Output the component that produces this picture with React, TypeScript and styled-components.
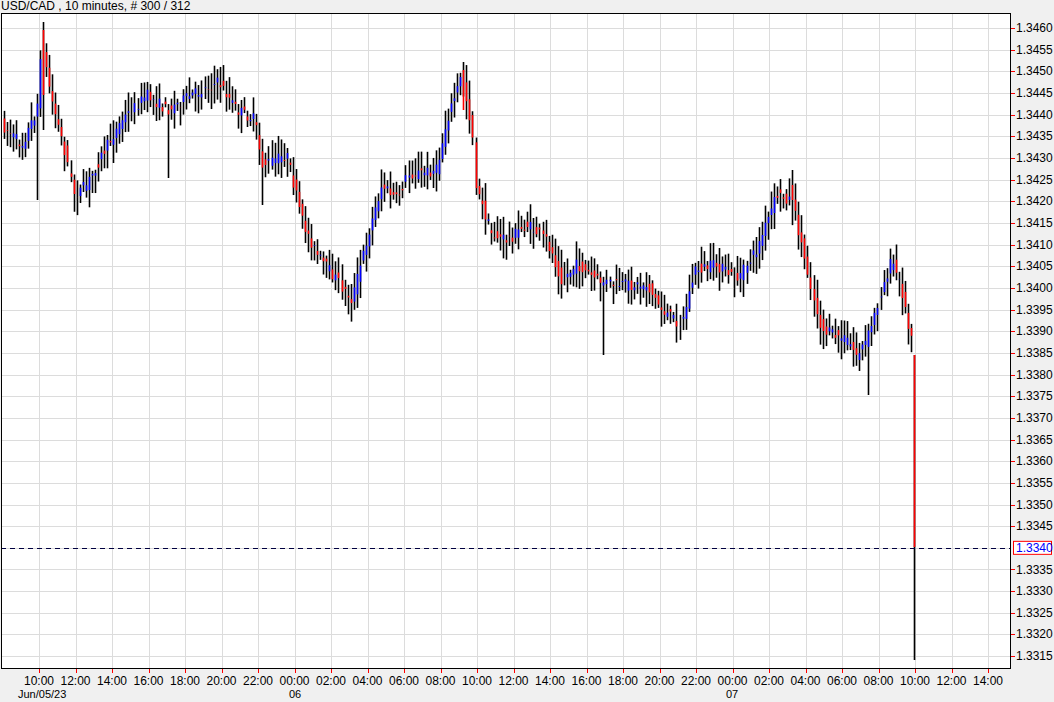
import React from 'react'
import styled, { createGlobalStyle } from 'styled-components'

const GlobalStyle = createGlobalStyle`
  html, body { margin: 0; padding: 0; background: #f0f0f0; overflow: hidden; }
  body { font-family: "Liberation Sans", Arial, sans-serif; }
`

const Page = styled.div`
  width: 1054px;
  height: 702px;
  display: flex;
  flex-direction: column;
  background: #f0f0f0;
`

const Title = styled.div`
  height: 13px;
  line-height: 12px;
  padding-left: 1px;
  font-size: 12px;
  color: #000;
  white-space: nowrap;
`

const Chart = styled.svg`
  display: block;
  font-family: "Liberation Sans", Arial, sans-serif;
`

// geometry
const PLOT_L = 1
const PLOT_R = 1011
const PLOT_T = 13
const PLOT_B = 669
const priceY = (p: number) => 28 + ((1.346 - p) / 0.0005) * 21.66
const barX = (i: number) => 914 - (299 - i) * 3.045

// path of the market, (x, y) in screen space
const path: [number, number][] = [
  [0, 120], [25, 145], [40, 110], [45, 45], [55, 100], [65, 140], [78, 195], [90, 185],
  [105, 155], [125, 120], [150, 95], [170, 110], [195, 95], [222, 82], [240, 110], [258, 120],
  [265, 165], [290, 155], [305, 220], [320, 255], [340, 280], [355, 300], [370, 240], [385, 185],
  [400, 200], [410, 175], [440, 170], [450, 120], [465, 75], [475, 130], [480, 190], [495, 235],
  [510, 240], [530, 225], [550, 240], [565, 280], [580, 265], [600, 280], [620, 285], [650, 285],
  [665, 310], [685, 325], [698, 270], [720, 265], [740, 280], [760, 250], [780, 195], [795, 200],
  [810, 270], [825, 330], [850, 340], [860, 355], [870, 340], [885, 290], [895, 260], [905, 290],
  [912, 330],
]

const midAt = (x: number) => {
  if (x <= path[0][0]) return path[0][1]
  for (let k = 0; k < path.length - 1; k++) {
    const [x0, y0] = path[k]
    const [x1, y1] = path[k + 1]
    if (x >= x0 && x <= x1) return y0 + ((y1 - y0) * (x - x0)) / (x1 - x0)
  }
  return path[path.length - 1][1]
}

let seed = 7
const rnd = () => {
  seed = (seed * 16807) % 2147483647
  return seed / 2147483647
}

type Bar = { x: number; h: number; l: number; o: number; c: number }

const bars: Bar[] = []
for (let i = 0; i < 299; i++) {
  const x = Math.round(barX(i)) + 0.5
  const m = midAt(x)
  const next = midAt(x + 3)
  const o = m + (rnd() - 0.5) * 12
  const c = next + (rnd() - 0.5) * 12
  const h = Math.min(o, c) - rnd() * 16 - 3
  const l = Math.max(o, c) + rnd() * 16 + 3
  bars.push({ x, h, l, o, c })
}
// a few spikes as in the reference
bars[11] = { ...bars[11], l: 200 }
bars[13] = { ...bars[13], h: 22, l: 130, o: 30, c: 95 }
bars[54] = { ...bars[54], l: 178 }
bars[85] = { ...bars[85], l: 205 }
bars[151] = { ...bars[151], h: 62, o: 70, c: 110 }
bars[197] = { ...bars[197], l: 355 }
bars[259] = { ...bars[259], h: 170, o: 185, c: 200 }
bars[284] = { ...bars[284], l: 395 }
bars.push({ x: 914.5, h: 355, l: 660, o: 355, c: 547 })

const prices: number[] = []
for (let k = 0; k <= 29; k++) prices.push(1.346 - k * 0.0005)

const timeTicks = [
  '10:00', '12:00', '14:00', '16:00', '18:00', '20:00', '22:00', '00:00', '02:00', '04:00', '06:00', '08:00',
  '10:00', '12:00', '14:00', '16:00', '18:00', '20:00', '22:00', '00:00', '02:00', '04:00', '06:00', '08:00',
  '10:00', '12:00', '14:00',
]
const timeX = (k: number) => 39 + k * 36.5

export default function App() {
  const current = 1.334
  const cy = priceY(current)
  return (
    <Page>
      <GlobalStyle />
      <Title>USD/CAD , 10 minutes, # 300 / 312</Title>
      <Chart width={1054} height={689} viewBox="0 13 1054 689">
        <rect x={PLOT_L} y={PLOT_T} width={PLOT_R - PLOT_L} height={PLOT_B - PLOT_T} fill="#fff" />
        {prices.map((p) => (
          <line key={p} x1={PLOT_L} x2={PLOT_R} y1={Math.round(priceY(p)) + 0.5} y2={Math.round(priceY(p)) + 0.5} stroke="#dcdcdc" />
        ))}
        {timeTicks.map((_, k) => (
          <line key={k} x1={Math.round(timeX(k)) + 0.5} x2={Math.round(timeX(k)) + 0.5} y1={PLOT_T} y2={PLOT_B} stroke="#dcdcdc" />
        ))}
        {bars.map((b, i) => {
          const up = b.c < b.o
          return (
            <g key={i}>
              <line x1={b.x} x2={b.x} y1={b.h} y2={b.l} stroke="#000" strokeWidth={1.6} />
              <line x1={b.x} x2={b.x} y1={b.o} y2={b.c} stroke={up ? '#0000ff' : '#ff0000'} strokeWidth={1.6} />
            </g>
          )
        })}
        <line x1={PLOT_L} x2={PLOT_R} y1={Math.round(cy) + 0.5} y2={Math.round(cy) + 0.5} stroke="#000040" strokeDasharray="5 4" />
        <rect x={PLOT_L + 0.5} y={PLOT_T + 0.5} width={PLOT_R - PLOT_L - 1} height={PLOT_B - PLOT_T - 1} fill="none" stroke="#000" />
        {prices.map((p) =>
          Math.abs(p - current) < 1e-6 ? null : (
            <g key={p}>
              <line x1={PLOT_R} x2={PLOT_R + 4} y1={Math.round(priceY(p)) + 0.5} y2={Math.round(priceY(p)) + 0.5} stroke="#ff0000" />
              <text x={PLOT_R + 5} y={priceY(p) + 4} fontSize={12} fill="#000">{p.toFixed(4)}</text>
            </g>
          )
        )}
        <rect x={1013.5} y={cy - 6.5} width={38} height={13} fill="#fff" stroke="#ff0000" />
        <text x={1016} y={cy + 4} fontSize={12} fill="#0000ff">{current.toFixed(4)}</text>
        {timeTicks.map((t, k) => (
          <g key={k}>
            <line x1={Math.round(timeX(k)) + 0.5} x2={Math.round(timeX(k)) + 0.5} y1={PLOT_B} y2={PLOT_B + 4} stroke="#ff0000" />
            <text x={timeX(k)} y={PLOT_B + 16} fontSize={12} textAnchor="middle" fill="#000">{t}</text>
          </g>
        ))}
        <text x={18} y={698} fontSize={11} fill="#000">Jun/05/23</text>
        <text x={289} y={698} fontSize={11} fill="#000">06</text>
        <text x={726} y={698} fontSize={11} fill="#000">07</text>
      </Chart>
    </Page>
  )
}
